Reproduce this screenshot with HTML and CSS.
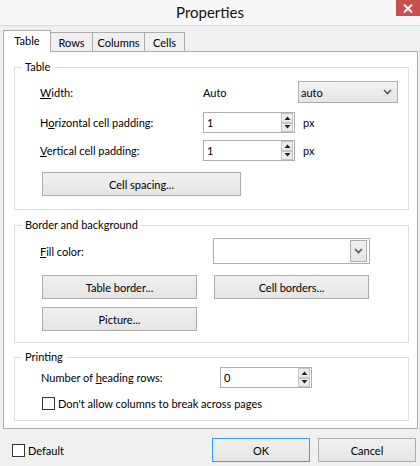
FILE: index.html
```
<!DOCTYPE html>
<html>
<head>
<meta charset="utf-8">
<link rel="stylesheet" href="styles.css">
</head>
<body>
<div class="titlebar">
  <span class="title">Properties</span>
  <div class="close"><svg width="10" height="9" viewBox="0 0 10 9"><path d="M1 0.5 L9 8.5 M9 0.5 L1 8.5" stroke="#fff" stroke-width="2"/></svg></div>
</div>
<div class="tabs">
  <div class="tab active">Table</div>
  <div class="tab t-rows">Rows</div>
  <div class="tab t-cols">Columns</div>
  <div class="tab t-cells">Cells</div>
</div>
<div class="panel">
  <fieldset class="group g1">
    <legend>Table</legend>
    <div class="gbody">
      <div class="row r-width">
        <span class="lbl"><u>W</u>idth:</span>
        <span class="auto">Auto</span>
        <div class="select sel-auto"><span>auto</span><svg width="9" height="6" viewBox="0 0 9 6"><path d="M1 1 L4.5 4.5 L8 1" fill="none" stroke="#555" stroke-width="1.6"/></svg></div>
      </div>
      <div class="row r-sp1">
        <span class="lbl">H<u>o</u>rizontal cell padding:</span>
        <div class="spin"><span class="val">1</span><div class="spinbtns"><div class="sb"><svg width="7" height="4" viewBox="0 0 7 4"><path d="M0.5 4 L3.5 0.5 L6.5 4 Z" fill="#222"/></svg></div><div class="sb"><svg width="7" height="4" viewBox="0 0 7 4"><path d="M0.5 0 L3.5 3.5 L6.5 0 Z" fill="#222"/></svg></div></div></div>
        <span class="px">px</span>
      </div>
      <div class="row r-sp2">
        <span class="lbl"><u>V</u>ertical cell padding:</span>
        <div class="spin"><span class="val">1</span><div class="spinbtns"><div class="sb"><svg width="7" height="4" viewBox="0 0 7 4"><path d="M0.5 4 L3.5 0.5 L6.5 4 Z" fill="#222"/></svg></div><div class="sb"><svg width="7" height="4" viewBox="0 0 7 4"><path d="M0.5 0 L3.5 3.5 L6.5 0 Z" fill="#222"/></svg></div></div></div>
        <span class="px">px</span>
      </div>
      <button class="btn b-spacing">Cell spacing...</button>
    </div>
  </fieldset>
  <fieldset class="group g2">
    <legend>Border and background</legend>
    <div class="gbody">
      <div class="row r-fill">
        <span class="lbl"><u>F</u>ill color:</span>
        <div class="select sel-fill"><div class="arrowbox"><svg width="9" height="6" viewBox="0 0 9 6"><path d="M1 1 L4.5 4.5 L8 1" fill="none" stroke="#555" stroke-width="1.6"/></svg></div></div>
      </div>
      <div class="btnrow">
        <button class="btn b-half">Table border...</button>
        <button class="btn b-half">Cell borders...</button>
      </div>
      <button class="btn b-half b-pic">Picture...</button>
    </div>
  </fieldset>
  <fieldset class="group g3">
    <legend>Printing</legend>
    <div class="gbody">
      <div class="row r-head">
        <span class="lbl">Number of <u>h</u>eading rows:</span>
        <div class="spin"><span class="val">0</span><div class="spinbtns"><div class="sb"><svg width="7" height="4" viewBox="0 0 7 4"><path d="M0.5 4 L3.5 0.5 L6.5 4 Z" fill="#222"/></svg></div><div class="sb"><svg width="7" height="4" viewBox="0 0 7 4"><path d="M0.5 0 L3.5 3.5 L6.5 0 Z" fill="#222"/></svg></div></div></div>
      </div>
      <label class="check r-check"><span class="box"></span>Don't allow columns to break across pages</label>
    </div>
  </fieldset>
</div>
<div class="footer">
  <label class="check"><span class="box"></span>Default</label>
  <button class="btn b-foot b-ok">OK</button>
  <button class="btn b-foot">Cancel</button>
</div>
</body>
</html>
```
FILE: styles.css
```
* { box-sizing: border-box; }
body {
  margin: 0;
  width: 420px;
  height: 466px;
  overflow: hidden;
  background: #f0f0f0;
  font-family: Lato, "Noto Sans", sans-serif;
  font-size: 11px;
  color: #000;
}
.titlebar {
  position: relative;
  height: 26px;
  background: #f8f8f8;
  border-bottom: 1px solid #dadada;
  display: flex;
  justify-content: center;
  align-items: center;
}
.title { font-size: 15px; color: #111; margin-top: -1px; }
.close {
  position: absolute;
  top: 0;
  right: 0;
  width: 24px;
  height: 16px;
  background: #c75050;
  display: flex;
  align-items: center;
  justify-content: center;
}
.tabs {
  position: relative;
  z-index: 1;
  display: flex;
  align-items: flex-end;
  height: 22px;
  margin: 4px 0 -1px 3px;
}
.tab {
  height: 19px;
  margin-bottom: 1px;
  border: 1px solid #acacac;
  border-bottom: none;
  background: #f0f0f0;
  display: flex;
  align-items: center;
  justify-content: center;
  line-height: 1;
}
.tab.active {
  height: 22px;
  margin-bottom: 0;
  width: 48px;
  background: #fff;
  padding-bottom: 2px;
}
.t-rows { width: 42px; border-left: none; }
.t-cols { width: 52px; border-left: none; }
.t-cells { width: 40px; border-left: none; }
.panel {
  margin: 0 2px 0 3px;
  height: 378px;
  border: 1px solid #acacac;
  background: #fff;
  padding-top: 7px;
}
.group {
  margin: 0 8px 0 10px;
  padding: 0;
  border: 1px solid #dcdcdc;
  min-inline-size: 0;
}
.group legend {
  margin-left: 7px;
  padding: 0 3px;
  line-height: 16px;
  height: 16px;
}
.g2 { margin-top: 7px; }
.g3 { margin-top: 6px; }
.g1 .gbody { padding: 6px 0 13px 25px; }
.g2 .gbody { padding: 5px 0 11px 24px; }
.g3 .gbody { padding: 2px 0 10px 26px; }
.row { display: flex; align-items: center; }
.lbl { width: 163px; flex: none; }
.r-width { height: 22px; }
.auto { width: 95px; }
.r-sp1 { height: 21px; margin-top: 9px; }
.r-sp2 { height: 21px; margin-top: 7px; }
.select {
  height: 22px;
  border: 1px solid #acacac;
  display: flex;
  align-items: center;
}
.sel-auto {
  width: 100px;
  background: linear-gradient(#f2f2f2, #e5e5e5);
  padding: 0 5px 0 2px;
  justify-content: space-between;
}
.spin {
  width: 92px;
  height: 21px;
  border: 1px solid #abadb3;
  background: #fff;
  display: flex;
  align-items: center;
  justify-content: space-between;
  padding: 0 1px 0 3px;
}
.spinbtns { display: flex; flex-direction: column; height: 19px; }
.sb {
  width: 12px;
  height: 9.5px;
  border: 1px solid #c4c4c4;
  background: #ececec;
  display: flex;
  align-items: center;
  justify-content: center;
}
.px { margin-left: 8px; }
.btn {
  font: inherit;
  color: #000;
  height: 24px;
  border: 1px solid #acacac;
  background: linear-gradient(#f0f0f0, #e5e5e5);
  padding: 0;
  display: flex;
  align-items: center;
  justify-content: center;
}
.b-spacing { width: 199px; margin: 11px 0 0 2px; }
.r-fill { height: 26px; }
.g2 .lbl { width: 174px; padding-left: 1px; }
.sel-fill {
  width: 157px;
  height: 26px;
  border-color: #abadb3;
  background: #fff;
  justify-content: flex-end;
  padding-right: 2px;
}
.arrowbox {
  width: 17px;
  height: 22px;
  border: 1px solid #acacac;
  background: linear-gradient(#f0f0f0, #e5e5e5);
  display: flex;
  align-items: center;
  justify-content: center;
}
.btnrow { display: flex; gap: 17px; margin: 11px 0 0 3px; }
.b-half { width: 155px; }
.b-pic { margin: 8px 0 0 3px; }
.g3 .lbl { width: 179px; padding-left: 0; }
.r-head { height: 21px; }
.check { display: flex; align-items: center; gap: 3px; }
.box {
  width: 13px;
  height: 13px;
  border: 1px solid #333;
  background: #fff;
  flex: none;
}
.r-check { margin: 8px 0 0 1px; height: 14px; }
.footer {
  display: flex;
  align-items: center;
  padding: 9px 4px 0 12px;
}
.b-foot { width: 98px; }
.b-ok { margin-left: auto; margin-right: 8px; border-color: #3399ff; }
```
